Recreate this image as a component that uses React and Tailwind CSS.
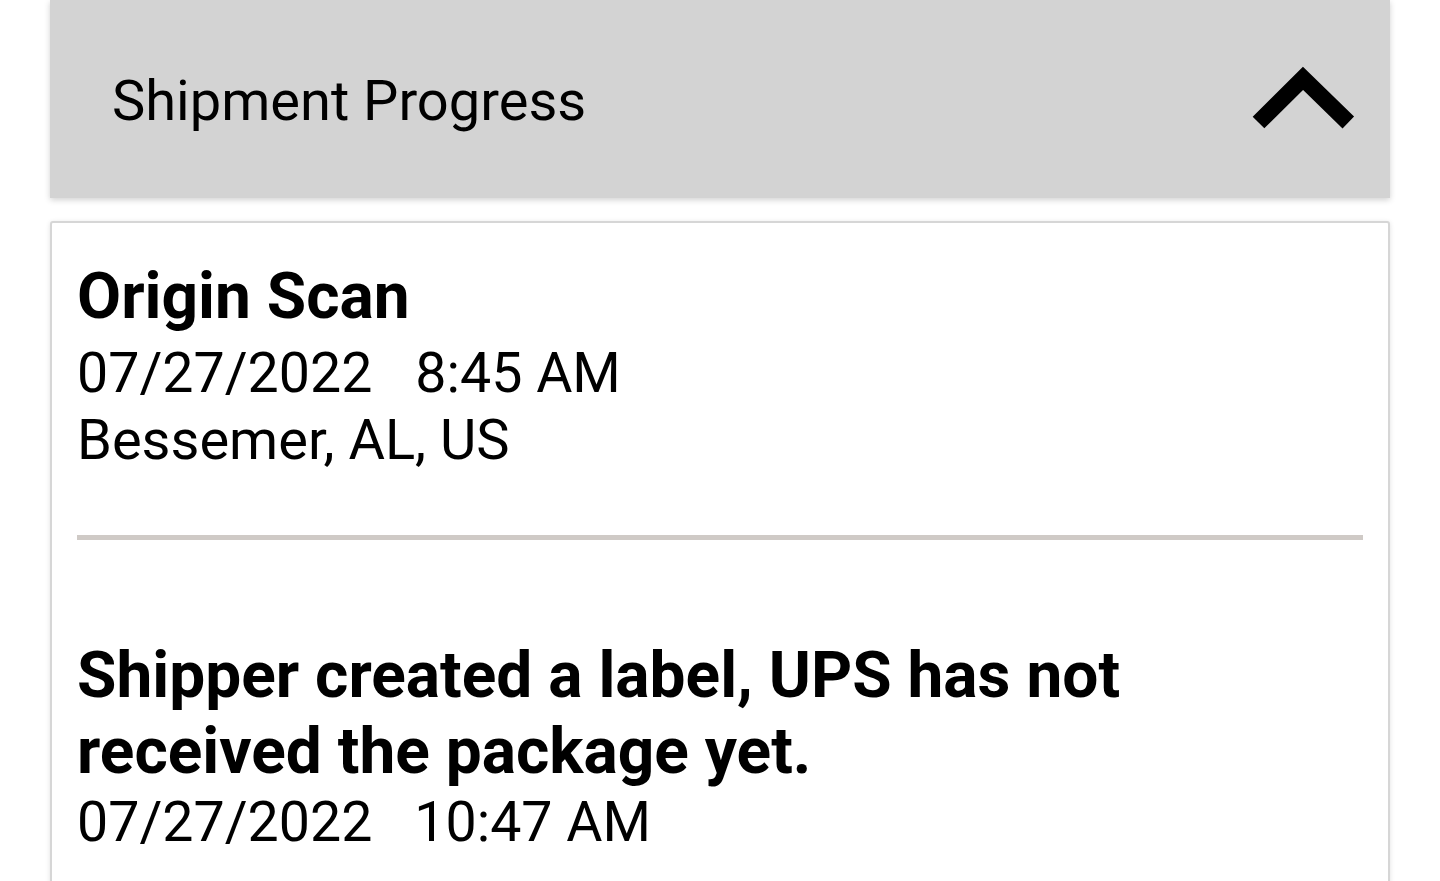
export default function App() {
  return (
    <div className="min-h-[881px] overflow-hidden bg-white text-black" style={{ fontFamily: 'Roboto, "Liberation Sans", sans-serif' }}>
      <div className="mx-[50px] flex h-[198px] items-center justify-between bg-[#d3d3d3] pt-[4px] pl-[62px] pr-[32px] shadow-[0_2px_6px_rgba(0,0,0,0.18)]">
        <h2 className="text-[56px] leading-[66px] font-normal">Shipment Progress</h2>
        <svg width="110" height="80" viewBox="0 0 110 80" className="mb-[8px]">
          <polyline
            points="10.5,65.5 55,21.3 100.3,65.5"
            fill="none"
            stroke="#000"
            strokeWidth="16.5"
            strokeLinecap="butt"
            strokeLinejoin="miter"
          />
        </svg>
      </div>

      <div className="mx-[50px] mt-[23px] rounded-[3px] border-2 border-[#d6d6d6] bg-white px-[25px] pt-[32px] pb-[40px] shadow-[0_1px_5px_rgba(0,0,0,0.12)]">
        <div>
          <p className="text-[64px] leading-[84px] font-bold">Origin Scan</p>
          <p className="mt-[2px] text-[55.5px] leading-[66px]">
            07/27/2022<span className="ml-[43px]">8:45 AM</span>
          </p>
          <p className="text-[56px] leading-[66px]">Bessemer, AL, US</p>
        </div>

        <div className="mt-[62px] h-[5px] bg-[#cfcac6]" />

        <div className="mt-[98px]">
          <p className="text-[64px] leading-[76px] font-bold">
            Shipper created a label, UPS has not
            <br />
            received the package yet.
          </p>
          <p className="text-[55.5px] leading-[66px]">
            07/27/2022<span className="ml-[42px]">10:47 AM</span>
          </p>
        </div>
      </div>
    </div>
  )
}
